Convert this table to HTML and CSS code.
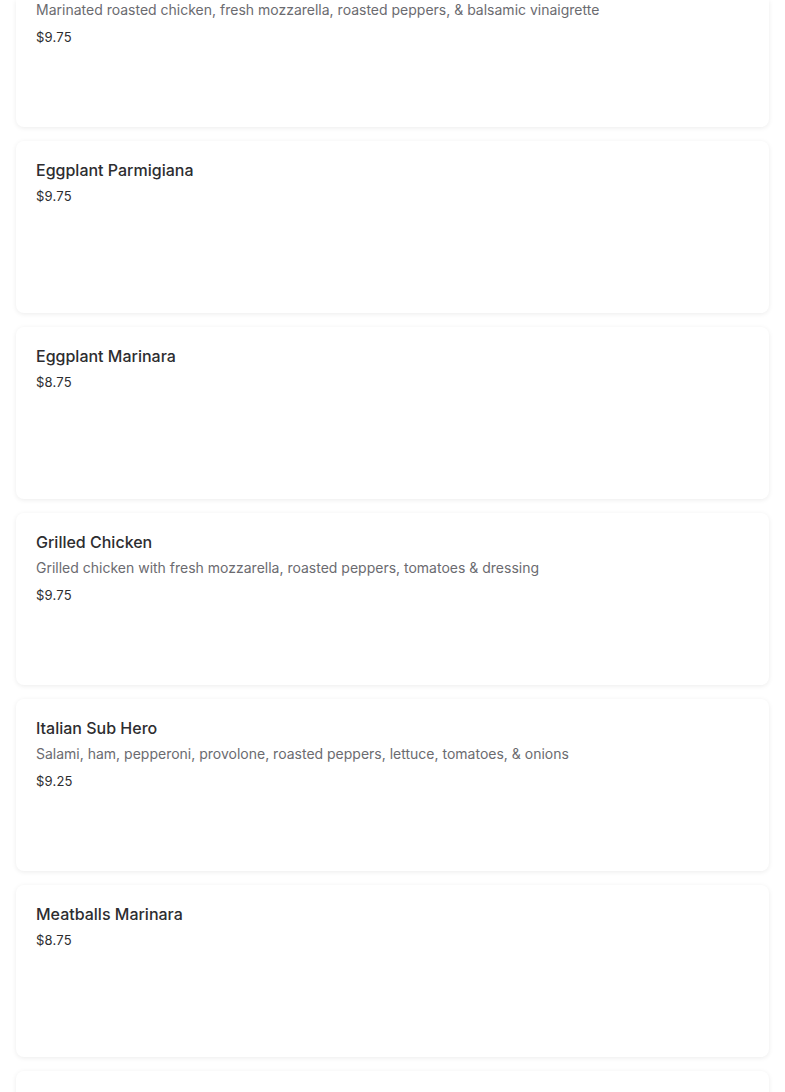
FILE: index.html
```html
<!DOCTYPE html>
<html>
<head>
<meta charset="utf-8">
<link rel="stylesheet" href="styles.css">
</head>
<body>
<div class="list">
  <div class="card">
    <div class="desc">Marinated roasted chicken, fresh mozzarella, roasted peppers, &amp; balsamic vinaigrette</div>
    <div class="price">$9.75</div>
  </div>
  <div class="card">
    <div class="title">Eggplant Parmigiana</div>
    <div class="price">$9.75</div>
  </div>
  <div class="card">
    <div class="title">Eggplant Marinara</div>
    <div class="price">$8.75</div>
  </div>
  <div class="card">
    <div class="title">Grilled Chicken</div>
    <div class="desc">Grilled chicken with fresh mozzarella, roasted peppers, tomatoes &amp; dressing</div>
    <div class="price">$9.75</div>
  </div>
  <div class="card">
    <div class="title">Italian Sub Hero</div>
    <div class="desc">Salami, ham, pepperoni, provolone, roasted peppers, lettuce, tomatoes, &amp; onions</div>
    <div class="price">$9.25</div>
  </div>
  <div class="card">
    <div class="title">Meatballs Marinara</div>
    <div class="price">$8.75</div>
  </div>
  <div class="card card-partial"></div>
</div>
</body>
</html>
```
FILE: styles.css
```css
html, body {
  margin: 0;
  padding: 0;
  background: #ffffff;
  overflow: hidden;
}
body {
  font-family: Inter, "Liberation Sans", sans-serif;
  color: #2d2d2d;
}
.list {
  display: flex;
  flex-direction: column;
  gap: 14px;
  padding: 0 16px;
}
.card {
  box-sizing: border-box;
  height: 172px;
  background: #fff;
  border-radius: 8px;
  box-shadow: 0 1px 5px rgba(0, 0, 0, 0.08);
  padding: 19px 20px;
  display: flex;
  flex-direction: column;
}
.list > .card:first-child {
  height: 127px;
  border-top-left-radius: 0;
  border-top-right-radius: 0;
  padding-top: 0;
}
.title {
  font-size: 16px;
  font-weight: 500;
  line-height: 20px;
  letter-spacing: 0;
  color: #2d2d30;
}
.desc {
  margin-top: 6px;
  font-size: 14px;
  line-height: 20px;
  letter-spacing: 0;
  color: #6b6b70;
}
.card:first-child .desc {
  margin-top: 0;
}
.price {
  margin-top: 8px;
  font-size: 13px;
  line-height: 18px;
  letter-spacing: 0.2px;
  color: #2d2d30;
}
.title + .price {
  margin-top: 7px;
}
```
